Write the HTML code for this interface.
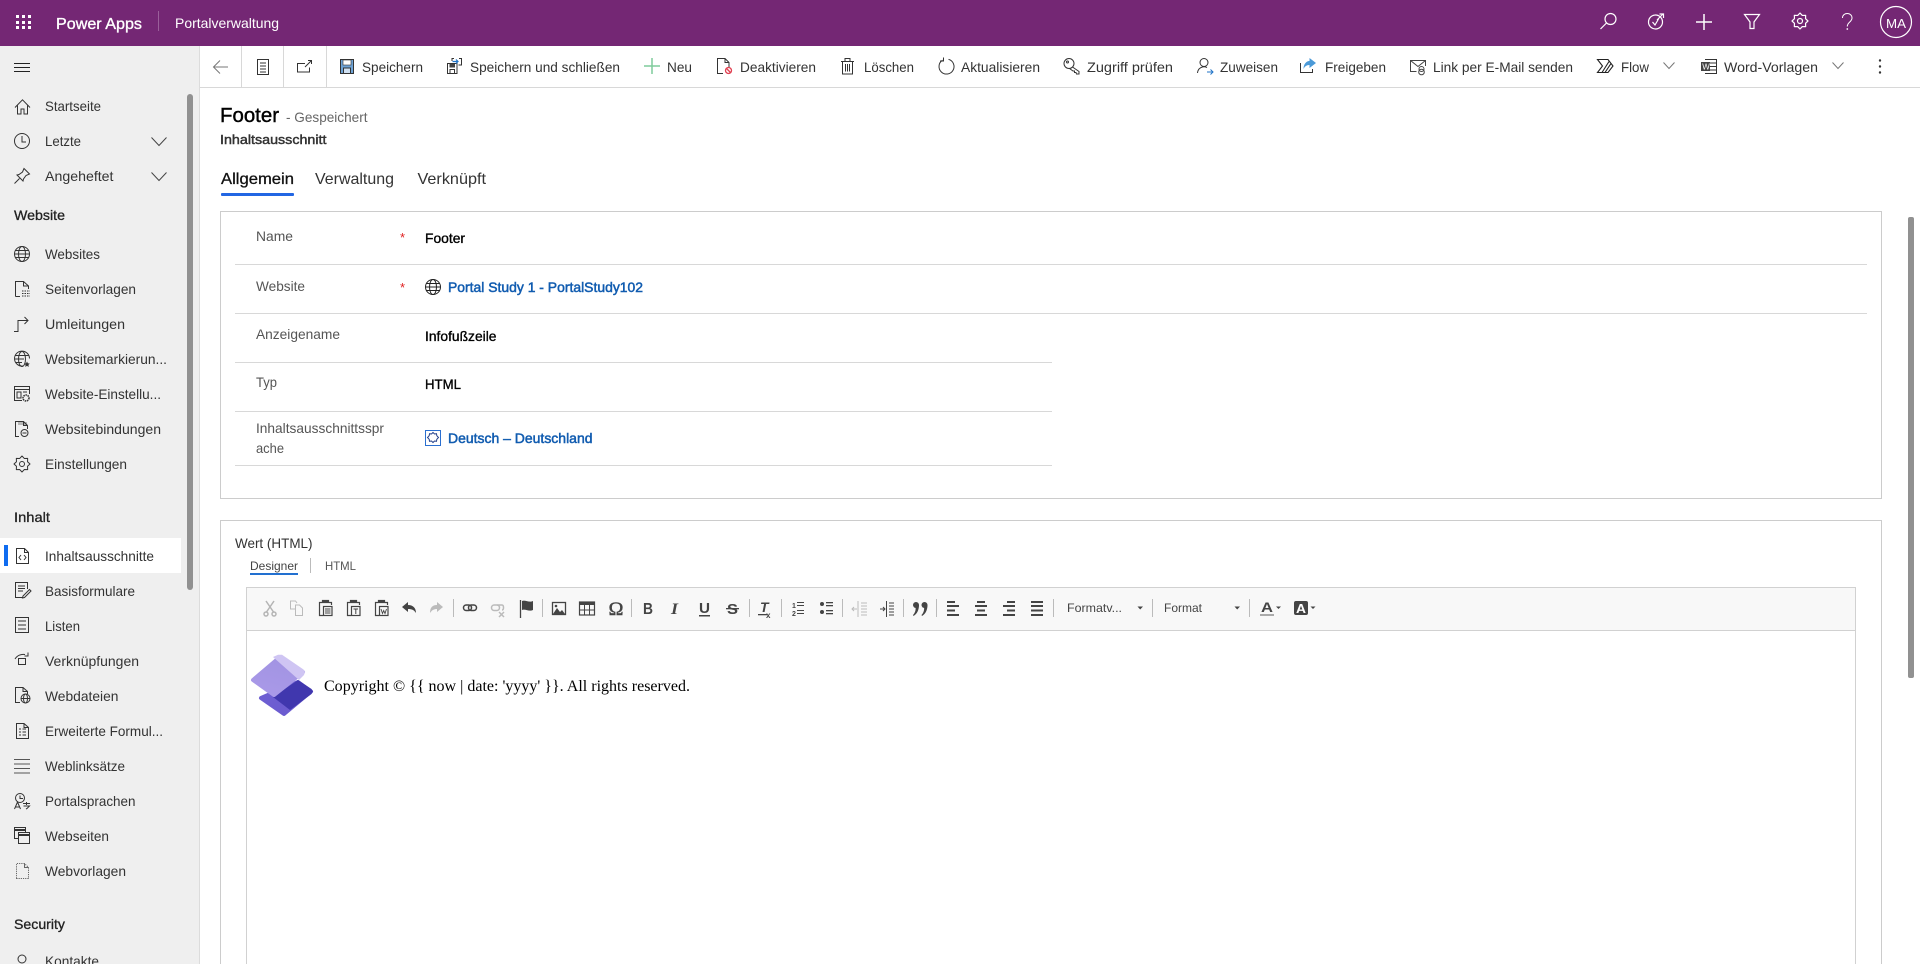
<!DOCTYPE html>
<html lang="de"><head><meta charset="utf-8"><title>Footer - Portalverwaltung</title>
<style>
html,body{margin:0;padding:0;width:1920px;height:964px;overflow:hidden;background:#fff}
svg{display:block;font-family:"Liberation Sans",sans-serif}
.i{fill:none;stroke:#333;stroke-width:1}
.w{fill:none;stroke:#fff;stroke-width:1.2}
.n{font-size:14px;fill:#333}
.h{font-size:14px;fill:#222;stroke:#222;stroke-width:.3}
.c{font-size:14px;fill:#333}
.l{font-size:14px;fill:#555}
.v{font-size:14px;fill:#000;stroke:#000;stroke-width:.35}
.a{font-size:14px;fill:#115cb0;stroke:#115cb0;stroke-width:.5}
.d{fill:#444}
.t{fill:none;stroke:#444;stroke-width:1.2}
.g{fill:none;stroke:#bbb;stroke-width:1.3}
.s{stroke:#bbb;stroke-width:1}
</style></head><body>
<svg width="1920" height="964" viewBox="0 0 1920 964" xmlns="http://www.w3.org/2000/svg" shape-rendering="geometricPrecision">
<defs>
<linearGradient id="lg1" x1="0.7" y1="0" x2="0.3" y2="1"><stop offset="0" stop-color="#a193e2"/><stop offset="1" stop-color="#a999e8"/></linearGradient>
<linearGradient id="lg2" x1="0" y1="0" x2="1" y2="1"><stop offset="0" stop-color="#6f60d3"/><stop offset="1" stop-color="#6a5acf"/></linearGradient>
</defs>
<rect width="1920" height="964" fill="#fff"/>

<!-- Header -->
<rect width="1920" height="46" fill="#742774"/>
<g fill="#fff">
<rect x="16" y="15" width="3" height="3"/><rect x="22" y="15" width="3" height="3"/><rect x="28" y="15" width="3" height="3"/>
<rect x="16" y="21" width="3" height="3"/><rect x="22" y="21" width="3" height="3"/><rect x="28" y="21" width="3" height="3"/>
<rect x="16" y="26" width="3" height="3"/><rect x="22" y="26" width="3" height="3"/><rect x="28" y="26" width="3" height="3"/>
</g>
<text x="56" y="29" font-size="16" fill="#fff" stroke="#fff" stroke-width=".35" textLength="86" lengthAdjust="spacingAndGlyphs">Power Apps</text>
<rect x="158" y="11" width="1" height="20" fill="#9a5f9a"/>
<text x="175" y="28" font-size="14" fill="#fff" textLength="104" lengthAdjust="spacingAndGlyphs">Portalverwaltung</text>
<g transform="translate(1600,13)" class="w"><circle cx="10.5" cy="6" r="5.5"/><path d="M6.5 10L.5 16"/></g>
<g transform="translate(1648,13)" class="w"><circle cx="7.5" cy="9" r="7"/><path d="M4.500 9l2.500 3 3.500-6M9 7l6-6M11.500 1H15.500V5"/></g>
<g transform="translate(1696,14)" class="w" style="stroke-width:1.500"><path d="M8 0V16M0 8H16"/></g>
<g transform="translate(1744,14)" class="w"><path d="M.5 .5H15.500L10 8V14.500H6V8Z"/></g>
<g transform="translate(1792,13)" class="w" stroke-linejoin="round"><path d="M16 8L13.540 10.300 13.660 13.660 10.300 13.540 8 16 5.700 13.540 2.340 13.660 2.460 10.300 0 8 2.460 5.700 2.340 2.340 5.700 2.460 8 0 10.300 2.460 13.660 2.340 13.540 5.700Z"/><circle cx="8" cy="8" r="2.500"/></g>
<path d="M1842.500 18c0-6 9.500-6 9.500 0 0 4-4.700 4-4.700 8.500" fill="none" stroke="#fff" stroke-width="1"/><circle cx="1847.300" cy="29" r=".9" fill="#fff"/>
<circle cx="1896" cy="22" r="15.500" fill="none" stroke="#fff" stroke-width="1.200"/>
<text x="1886" y="28" font-size="13" fill="#fff" textLength="20" lengthAdjust="spacingAndGlyphs">MA</text>

<!-- Sidebar -->
<rect x="0" y="46" width="200" height="918" fill="#efefef"/>
<rect x="199" y="46" width="1" height="918" fill="#dcdcdc"/>
<rect x="187" y="94" width="6" height="496" rx="3" fill="#919191"/>
<path d="M14 63.500H30M14 67.500H30M14 71.500H30" stroke="#222" stroke-width="1" fill="none"/>
<rect x="0" y="538" width="181" height="35" fill="#fff"/>
<rect x="4" y="545" width="4" height="21" fill="#0f6cf0"/>

<text x="45" y="111" class="n" textLength="56" lengthAdjust="spacingAndGlyphs">Startseite</text>
<text x="45" y="146" class="n" textLength="36" lengthAdjust="spacingAndGlyphs">Letzte</text>
<text x="45" y="181" class="n" textLength="68.500" lengthAdjust="spacingAndGlyphs">Angeheftet</text>
<text x="14" y="220" class="h" textLength="51" lengthAdjust="spacingAndGlyphs">Website</text>
<text x="45" y="259" class="n" textLength="55" lengthAdjust="spacingAndGlyphs">Websites</text>
<text x="45" y="294" class="n" textLength="91" lengthAdjust="spacingAndGlyphs">Seitenvorlagen</text>
<text x="45" y="329" class="n" textLength="80" lengthAdjust="spacingAndGlyphs">Umleitungen</text>
<text x="45" y="364" class="n" textLength="122" lengthAdjust="spacingAndGlyphs">Websitemarkierun...</text>
<text x="45" y="399" class="n" textLength="116" lengthAdjust="spacingAndGlyphs">Website-Einstellu...</text>
<text x="45" y="434" class="n" textLength="116" lengthAdjust="spacingAndGlyphs">Websitebindungen</text>
<text x="45" y="469" class="n" textLength="82" lengthAdjust="spacingAndGlyphs">Einstellungen</text>
<text x="14" y="522" class="h" textLength="36" lengthAdjust="spacingAndGlyphs">Inhalt</text>
<text x="45" y="561" class="n" textLength="109" lengthAdjust="spacingAndGlyphs">Inhaltsausschnitte</text>
<text x="45" y="596" class="n" textLength="90" lengthAdjust="spacingAndGlyphs">Basisformulare</text>
<text x="45" y="631" class="n" textLength="35" lengthAdjust="spacingAndGlyphs">Listen</text>
<text x="45" y="666" class="n" textLength="94" lengthAdjust="spacingAndGlyphs">Verknüpfungen</text>
<text x="45" y="701" class="n" textLength="73.500" lengthAdjust="spacingAndGlyphs">Webdateien</text>
<text x="45" y="736" class="n" textLength="118" lengthAdjust="spacingAndGlyphs">Erweiterte Formul...</text>
<text x="45" y="771" class="n" textLength="80" lengthAdjust="spacingAndGlyphs">Weblinksätze</text>
<text x="45" y="806" class="n" textLength="90.500" lengthAdjust="spacingAndGlyphs">Portalsprachen</text>
<text x="45" y="841" class="n" textLength="64" lengthAdjust="spacingAndGlyphs">Webseiten</text>
<text x="45" y="876" class="n" textLength="81" lengthAdjust="spacingAndGlyphs">Webvorlagen</text>
<text x="14" y="929" class="h" textLength="51" lengthAdjust="spacingAndGlyphs">Security</text>
<text x="45" y="966" class="n" textLength="54" lengthAdjust="spacingAndGlyphs">Kontakte</text>

<!-- Sidebar icons -->
<g transform="translate(15,99)" class="i"><path d="M0 8.500L7.500.8 15 8.500M2.500 6.500V15H6V10H9V15H12.500V6.500"/></g>
<g transform="translate(14,133)" class="i"><circle cx="8" cy="8" r="7.500"/><path d="M8 3V9H12"/></g>
<g transform="translate(14,168)" class="i"><path d="M10 .5L15.500 6 12 7.500 9.500 11 9 13 3 7 5 6.500 8.500 4ZM5.500 10.500L.5 15.500"/></g>
<path d="M151.500 137.500L159 145.500 166.500 137.500M151.500 172.500L159 180.500 166.500 172.500" fill="none" stroke="#444"/>
<g transform="translate(14,246)" class="i"><circle cx="8" cy="8" r="7.500"/><ellipse cx="8" cy="8" rx="3.500" ry="7.500"/><path d="M.5 8H15.500M1.500 4.500H14.500M1.500 11.500H14.500"/></g>
<g transform="translate(15,281)" class="i"><path d="M.5 15.500V.5H8.500L13.500 5V8M8.500 .5V5H13.500M.5 15.500H5"/><path d="M7 10H15M7 12.500H15M7 15H15" stroke-dasharray="1.500 1"/></g>
<g transform="translate(14,316)" class="i"><path d="M0 15.500H4V4.500H14M10.500 1L14 4.500 10.500 8"/></g>
<g transform="translate(14,351)" class="i"><path d="M9 15A7.500 7.500 0 1 1 15.500 7.500"/><ellipse cx="8" cy="8" rx="3.500" ry="7.500"/><path d="M.5 8H10M1.500 4.500H14.500M1.500 11.500H8"/><path d="M13 10.500l.9 1.800 1.900.3-1.400 1.300.4 2-1.800-1-1.800 1 .4-2-1.400-1.300 1.900-.3Z" fill="#333" stroke="none"/></g>
<g transform="translate(14,386)" class="i"><path d="M15.500 8V.5H.5V14.500H8M.5 3.500H15.500" /><rect x="3" y="6" width="4" height="6"/><circle cx="12" cy="12" r="3" stroke-dasharray="1.500 .7" stroke-width="1.500"/><path d="M9 6H13" /></g>
<g transform="translate(15,421)" class="i"><path d="M4 15.500H.5V.5H8.500L12.500 4.500V8M8.500 .5V4.500H12.500"/><rect x="3" y="1" width="9" height="3" fill="#333" opacity=".3" stroke="none"/><circle cx="9.500" cy="12" r="3.500"/><path d="M7.500 12H11.500"/></g>
<g transform="translate(14,456)" class="i" stroke-linejoin="round"><path d="M16 8L13.540 10.300 13.660 13.660 10.300 13.540 8 16 5.700 13.540 2.340 13.660 2.460 10.300 0 8 2.460 5.700 2.340 2.340 5.700 2.460 8 0 10.300 2.460 13.660 2.340 13.540 5.700Z"/><circle cx="8" cy="8" r="2.500"/></g>
<g transform="translate(16,548)" class="i"><path d="M.5 15.500V.5H8.500L12.500 4.500V15.500ZM8.500 .5V4.500H12.500M5 7L3 9.500 5 12M8 7L10 9.500 8 12"/></g>
<g transform="translate(15,582)" class="i"><path d="M8 15.500H.5V.5H12.500V7M3 4H10M3 6.500H10M3 9H8"/><path d="M14.500 7.500L16 9 9.500 15.500 7.500 16 8 14Z"/></g>
<g transform="translate(15,617)" class="i"><rect x=".5" y=".5" width="13" height="15"/><path d="M3 4H11M3 8H11M3 12H11"/></g>
<g transform="translate(14,652)" class="i"><path d="M1 7A9.500 9.500 0 0 1 11 2.500M14 .5V4H10.500"/><rect x="4.500" y="6.500" width="7" height="6"/></g>
<g transform="translate(15,687)" class="i"><path d="M5 15.500H.5V.5H8L12.500 4.500V7M8 .5V4.500H12.500"/><circle cx="10.500" cy="11.500" r="4.500"/><ellipse cx="10.500" cy="11.500" rx="2" ry="4.500"/><path d="M6 11.500H15"/></g>
<g transform="translate(16,723)" class="i"><path d="M.5 15.500V.5H8L12.500 4.500V15.500ZM8 .5V4.500H12.500M3 6H5M3 9H5M3 12H5M6.500 9H10M6.500 12H10M6.500 6H10"/></g>
<g transform="translate(14,758)" class="i" style="stroke:#555"><path d="M0 1.500H16M0 6H16M0 10.500H16M0 15H16"/></g>
<g transform="translate(14,793)" class="i"><circle cx="6" cy="5" r="4.500"/><path d="M6 2.500V5.500H9M.5 16L3.500 9 6.500 16M1.500 14H5.500M9 10.500H16M12.500 9V12M9.500 13H15.500L13 15.500 12 16"/></g>
<g transform="translate(14,827)" class="i"><rect x=".5" y=".5" width="11" height="11"/><rect x="4.500" y="5.500" width="11" height="11" fill="#efefef"/><path d="M.5 3H11.500M4.500 8H15.500" stroke-width="2"/></g>
<g transform="translate(16,863)" class="i" style="stroke:#666"><path d="M.5 15.500V.5H8.500L12.500 4.500V15.500Z" stroke-dasharray="1.200 1"/><path d="M8.500 .5V4.500H12.500"/></g>
<g transform="translate(14,954)" class="i"><circle cx="8" cy="5" r="4"/></g>

<!-- Command bar -->
<rect x="200" y="87" width="1720" height="1" fill="#d8d8d8"/>
<rect x="241" y="46" width="1" height="41" fill="#d8d8d8"/><rect x="283" y="46" width="1" height="41" fill="#d8d8d8"/><rect x="326" y="46" width="1" height="41" fill="#d8d8d8"/>
<path d="M228 67H214M220 60.500L213.500 67 220 73.500" fill="none" stroke="#777"/>
<g transform="translate(257,59)" class="i"><rect x=".5" y=".5" width="11" height="15"/><path d="M3 4H9M3 7H9M3 10H9M3 13H9"/></g>
<g transform="translate(297,60)" class="i"><path d="M8 3.500H.5V12H12.500V7.500M8 7L14.500 .5M11 .5H14.500V4"/></g>
<text x="362" y="72" class="c" textLength="61" lengthAdjust="spacingAndGlyphs">Speichern</text>
<g transform="translate(340,59)"><rect x=".5" y=".5" width="13" height="14" fill="#6ea3d6" stroke="#333"/><rect x="3" y="1" width="8" height="5" fill="#fff" stroke="#333" stroke-width=".6"/><rect x="3.500" y="9" width="7" height="5.500" fill="#cfe0f2" stroke="#333"/></g>
<text x="470" y="72" class="c" textLength="150" lengthAdjust="spacingAndGlyphs">Speichern und schließen</text>
<g transform="translate(447,58)"><path d="M.5 5.500H10V15.500H.5Z" fill="#fff" stroke="#333"/><rect x="2.500" y="6" width="5.500" height="3.500" fill="#444"/><rect x="3" y="11.500" width="4.500" height="4" fill="none" stroke="#333"/><path d="M5 3V.5H7M12 .5H14.500V7H11.500" fill="none" stroke="#333"/><path d="M5.500 3.500H11M9 1.500L11 3.500 9 5.500" fill="none" stroke="#1f73c7" stroke-width="1.200"/></g>
<text x="667" y="72" class="c" textLength="25" lengthAdjust="spacingAndGlyphs">Neu</text>
<path d="M652 58V74M644 66H660" stroke="#7fcb9c" stroke-width="1.500" fill="none"/>
<text x="740" y="72" class="c" textLength="76" lengthAdjust="spacingAndGlyphs">Deaktivieren</text>
<g transform="translate(717,58)" class="i"><path d="M6 15.500H.5V.5H8L12 4.500V9M8 .5V4.500H12"/><circle cx="11.500" cy="12.500" r="3" style="stroke:#e04050;stroke-width:1.300"/><path d="M9.500 10.500L13.500 14.500" style="stroke:#e04050;stroke-width:1.300"/></g>
<text x="864" y="72" class="c" textLength="50" lengthAdjust="spacingAndGlyphs">Löschen</text>
<g transform="translate(841,58)" class="i"><path d="M0 3.500H13M4 3.500V.5H9V3.500M1.500 3.500V16H11.500V3.500M4.500 6V13.500M6.500 6V13.500M8.500 6V13.500"/></g>
<text x="961" y="72" class="c" textLength="79" lengthAdjust="spacingAndGlyphs">Aktualisieren</text>
<g transform="translate(938,58)" class="i"><path d="M10.500 1.300A7.500 7.500 0 1 1 4.500 2.200M5.500 -.5V3H2"/></g>
<text x="1087" y="72" class="c" textLength="86" lengthAdjust="spacingAndGlyphs">Zugriff prüfen</text>
<g transform="translate(1063,58)" class="i"><circle cx="6" cy="5.500" r="5"/><path d="M9.500 9L16 13.500V16H13.500L13 14.500H11.500V13H10L6.500 10.500"/><circle cx="4.500" cy="4" r="1"/></g>
<text x="1220" y="72" class="c" textLength="58" lengthAdjust="spacingAndGlyphs">Zuweisen</text>
<g transform="translate(1197,58)" class="i"><circle cx="7" cy="4.500" r="4"/><path d="M.5 15A6.500 6.500 0 0 1 10 9.500"/><path d="M10 14H16M13.500 11.500L16 14 13.500 16.500" style="stroke:#1f73c7"/></g>
<text x="1325" y="72" class="c" textLength="61" lengthAdjust="spacingAndGlyphs">Freigeben</text>
<g transform="translate(1300,58)"><path d="M.5 5V14.500H12.500V11" fill="none" stroke="#333"/><path d="M9.500 0L16 5 9.500 10V7C6.500 7 4.500 8.500 3.500 11 3.500 6.500 6 3 9.500 3Z" fill="#4b9ad8"/></g>
<text x="1433" y="72" class="c" textLength="140" lengthAdjust="spacingAndGlyphs">Link per E-Mail senden</text>
<g transform="translate(1410,60)" class="i" style="stroke:#444"><path d="M6.500 11.500H.5V.5H15.500V6M.5 .5L8 6.500 15.500 .5"/><circle cx="11.500" cy="9" r="2.500"/><circle cx="11.500" cy="12" r="2.800"/></g>
<text x="1621" y="72" class="c" textLength="28" lengthAdjust="spacingAndGlyphs">Flow</text>
<g transform="translate(1597,59)" fill="none" stroke="#222" stroke-width="1.100"><path d="M.5 .5H11L16 7 11 13.500H.5L5.500 7Z"/><path d="M5 13.500L12 2.500M8 13.500L13.800 4.800"/></g>
<path d="M1663.500 62.500L1669 68.500 1674.500 62.500M1832.500 62.500L1838 68.500 1843.500 62.500" fill="none" stroke="#777"/>
<text x="1724" y="72" class="c" textLength="94" lengthAdjust="spacingAndGlyphs">Word-Vorlagen</text>
<g transform="translate(1701,59)"><path d="M4 .5H15.500V14.500H4M7 4H15.500M7 7.500H15.500M7 11H15.500" fill="none" stroke="#333"/><rect x="0" y="3" width="9" height="9" fill="#444"/><text x="1.300" y="10.500" font-size="8" fill="#fff">W</text></g>
<circle cx="1880" cy="60.500" r="1.200" fill="#333"/><circle cx="1880" cy="66.500" r="1.200" fill="#333"/><circle cx="1880" cy="72.500" r="1.200" fill="#333"/>

<!-- Title + tabs -->
<text x="220" y="122" font-size="20" fill="#000" stroke="#000" stroke-width=".4" textLength="59" lengthAdjust="spacingAndGlyphs">Footer</text>
<text x="286" y="122" font-size="14" fill="#666" textLength="81.500" lengthAdjust="spacingAndGlyphs">- Gespeichert</text>
<text x="220" y="144" font-size="13" fill="#333" stroke="#333" stroke-width=".45" textLength="106.500" lengthAdjust="spacingAndGlyphs">Inhaltsausschnitt</text>
<text x="221" y="184" font-size="16" fill="#111" stroke="#111" stroke-width=".3" textLength="73" lengthAdjust="spacingAndGlyphs">Allgemein</text>
<text x="315" y="184" font-size="16" fill="#333" textLength="79" lengthAdjust="spacingAndGlyphs">Verwaltung</text>
<text x="417.500" y="184" font-size="16" fill="#333" textLength="68.500" lengthAdjust="spacingAndGlyphs">Verknüpft</text>
<rect x="221" y="193" width="73" height="3" rx="1" fill="#2266e3"/>

<!-- Card 1 -->
<rect x="220.500" y="211.500" width="1661" height="287" fill="#fff" stroke="#cccccc"/>
<path d="M235 264.500H1867M235 313.500H1867M235 362.500H1052M235 411.500H1052M235 465.500H1052" stroke="#d8d8d8" fill="none"/>
<text x="256" y="241" class="l" textLength="37" lengthAdjust="spacingAndGlyphs">Name</text>
<text x="256" y="291" class="l" textLength="49" lengthAdjust="spacingAndGlyphs">Website</text>
<text x="256" y="339" class="l" textLength="84" lengthAdjust="spacingAndGlyphs">Anzeigename</text>
<text x="256" y="387" class="l" textLength="21" lengthAdjust="spacingAndGlyphs">Typ</text>
<text x="256" y="433" class="l" textLength="128" lengthAdjust="spacingAndGlyphs">Inhaltsausschnittsspr</text>
<text x="256" y="453" class="l" textLength="28" lengthAdjust="spacingAndGlyphs">ache</text>
<text x="400" y="242" font-size="13" fill="#e02020">*</text>
<text x="400" y="292" font-size="13" fill="#e02020">*</text>
<text x="425" y="243" class="v" textLength="40" lengthAdjust="spacingAndGlyphs">Footer</text>
<g transform="translate(425,279)" class="i" style="stroke:#222"><circle cx="8" cy="8" r="7.500"/><ellipse cx="8" cy="8" rx="3.500" ry="7.500"/><path d="M.5 8H15.500M1.500 4.500H14.500M1.500 11.500H14.500"/></g>
<text x="448" y="292" class="a" textLength="195" lengthAdjust="spacingAndGlyphs">Portal Study 1 - PortalStudy102</text>
<text x="425" y="341" class="v" textLength="71.500" lengthAdjust="spacingAndGlyphs">Infofußzeile</text>
<text x="425" y="389" class="v" textLength="36" lengthAdjust="spacingAndGlyphs">HTML</text>
<g transform="translate(425,430)"><rect x=".5" y=".5" width="15" height="15" fill="#fff" stroke="#2a6fd0"/><path d="M8 2.500l1.500 1.500 2-.3.300 2 1.700 1.800-1.700 1.800-.3 2-2-.3L8 12.500l-1.500-1.500-2 .3-.3-2L2.500 7.500l1.700-1.800.3-2 2 .3Z" fill="none" stroke="#24408a"/></g>
<text x="448" y="443" class="a" textLength="144.500" lengthAdjust="spacingAndGlyphs">Deutsch – Deutschland</text>

<!-- Card 2 -->
<path d="M220.500 964V520.500H1881.500V964" fill="#fff" stroke="#cccccc"/>
<text x="235" y="548" class="c" textLength="77.500" lengthAdjust="spacingAndGlyphs">Wert (HTML)</text>
<text x="250" y="570" font-size="12" fill="#444" textLength="48" lengthAdjust="spacingAndGlyphs">Designer</text>
<rect x="250" y="573" width="48" height="2" fill="#2270d0"/>
<rect x="310" y="558" width="1" height="15" fill="#bbb"/>
<text x="325" y="570" font-size="12" fill="#555" textLength="31" lengthAdjust="spacingAndGlyphs">HTML</text>

<!-- Editor -->
<path d="M246.500 964V587.500H1855.500V964" fill="#fff" stroke="#d1d1d1"/>
<rect x="247" y="588" width="1608" height="42" fill="#f8f8f8"/>
<rect x="247" y="630" width="1608" height="1" fill="#d1d1d1"/>
<g class="s">
<path d="M453.500 599V617M542.500 599V617M631.500 599V617M749.500 599V617M781.500 599V617M842.500 599V617M903.500 599V617M936.500 599V617M1053.500 599V617M1152.500 599V617M1249.500 599V617"/>
</g>
<!-- cut -->
<g class="g" style="stroke:#b5b5b5;stroke-width:1.500"><path d="M266 601L273.500 612M274 601L266.500 612"/><circle cx="266" cy="614" r="2"/><circle cx="274" cy="614" r="2"/></g>
<!-- copy -->
<g class="g" style="stroke-width:1"><path d="M295 609H290.500V601H295.500L297 603M295.500 605H299.500L302.500 608V615.500H295.500Z"/></g>
<!-- paste -->
<g class="t"><path d="M322 602.500H319.500V615.500H323M329 602.500H331.500V605"/><rect x="322.500" y="600.500" width="6" height="2" fill="#444"/><rect x="323.500" y="606.500" width="8.500" height="9"/><path d="M325 609H330.500M325 611H330.500M325 613H330.500" stroke-width="1"/></g>
<g class="t"><path d="M350 602.500H347.500V615.500H351M357 602.500H359.500V605"/><rect x="350.500" y="600.500" width="6" height="2" fill="#444"/><rect x="351.500" y="606.500" width="8.500" height="9"/><path d="M353.500 609H358M355.800 609V614" stroke-width="1"/></g>
<g class="t"><path d="M378 602.500H375.500V615.500H379M385 602.500H387.500V605"/><rect x="378.500" y="600.500" width="6" height="2" fill="#444"/><rect x="379.500" y="606.500" width="8.500" height="9"/><path d="M381 609L382.500 613.500 383.700 610.500 385 613.500 386.500 609" stroke-width=".9"/></g>
<!-- undo / redo -->
<path d="M402 607L408 602V605C413 605 416 608 416 613 414 610 412 609 408 609V612Z" fill="#444"/>
<path d="M443 607L437 602V605C432 605 430 608 430 613 432 610 434 609 437 609V612Z" fill="#bbb"/>
<!-- link -->
<g fill="none" stroke="#444" stroke-width="1.500"><rect x="463.500" y="605" width="8" height="5.500" rx="2.700"/><rect x="468.500" y="605" width="8" height="5.500" rx="2.700"/></g>
<g fill="none" stroke="#bbb" stroke-width="1.500"><rect x="491.500" y="605" width="8" height="5.500" rx="2.700"/><path d="M497 605H502C504 605 504 610 502 610"/><path d="M499 612L504 617M504 612L499 617"/></g>
<!-- flag -->
<path d="M520.500 600V618" stroke="#444" stroke-width="1.300"/><path d="M522 601C525 599.500 529 603 533 601V610C529 612 525 608.500 522 610Z" fill="#444"/>
<!-- image -->
<rect x="552.500" y="602.500" width="13" height="12" fill="none" stroke="#444" stroke-width="1.300"/><path d="M553 614L557 608 560 612 562 610 565 614Z" fill="#444"/><circle cx="556" cy="606" r="1.300" fill="#444"/>
<!-- table -->
<rect x="579.500" y="602" width="15" height="13" fill="none" stroke="#444" stroke-width="1.200"/><rect x="579.500" y="602" width="15" height="3" fill="#444"/><path d="M584.500 605V615M589.500 605V615M580 610H594" stroke="#444"/>
<!-- omega -->
<text x="608.500" y="615" font-size="19" fill="#444" stroke="#444" stroke-width=".4" font-family="Liberation Serif" textLength="15" lengthAdjust="spacingAndGlyphs">Ω</text>
<!-- B I U S -->
<text x="643" y="614" font-size="16" font-weight="bold" fill="#444" textLength="10" lengthAdjust="spacingAndGlyphs">B</text>
<text x="671" y="614" font-size="16" font-weight="bold" font-style="italic" fill="#444" font-family="Liberation Serif" textLength="7" lengthAdjust="spacingAndGlyphs">I</text>
<text x="699" y="613" font-size="15" font-weight="bold" fill="#444" textLength="11" lengthAdjust="spacingAndGlyphs">U</text><rect x="699" y="615" width="11" height="1.500" fill="#444"/>
<text x="727" y="614" font-size="15" font-weight="bold" fill="#444" textLength="11" lengthAdjust="spacingAndGlyphs">S</text><rect x="726" y="608" width="13" height="1.300" fill="#444"/>
<!-- clear -->
<text x="760" y="612" font-size="14" font-weight="bold" font-style="italic" fill="#444">T</text><rect x="758" y="614" width="9" height="1.300" fill="#444"/><text x="766" y="618" font-size="8" font-weight="bold" fill="#444">x</text>
<!-- lists -->
<g fill="#444"><text x="792" y="608" font-size="7" font-weight="bold">1</text><text x="792" y="616" font-size="7" font-weight="bold">2</text><rect x="797" y="602" width="7" height="1"/><rect x="797" y="605" width="7" height="1"/><rect x="797" y="610" width="7" height="1"/><rect x="797" y="613" width="7" height="1"/>
<circle cx="822" cy="604" r="2"/><circle cx="822" cy="612" r="2"/><rect x="826" y="602" width="7" height="1.300"/><rect x="826" y="605" width="7" height="1.300"/><rect x="826" y="610" width="7" height="1.300"/><rect x="826" y="613" width="7" height="1.300"/></g>
<g fill="none" stroke="#bbb"><path d="M858 601V617M861 603H867M861 606H867M861 609H867M861 612H867M861 615H867M852 609H857M854 607L852 609 854 611"/></g>
<g fill="none" stroke="#444"><path d="M886.500 601V617M889 603H894M889 606H894M889 609H894M889 612H894M889 615H894M880 609H885M883 607L885 609 883 611"/></g>
<!-- quote -->
<g fill="#444"><circle cx="916" cy="605" r="3"/><circle cx="924.500" cy="605" r="3"/><path d="M916.500 605H919C919 610 917 614 913.500 616L913 615C915 613 916 610 915.500 607ZM925 605H927.500C927.500 610 925.500 614 922 616L921.500 615C923.500 613 924.500 610 924 607Z"/></g>
<!-- aligns -->
<g fill="#444"><rect x="947" y="601" width="8" height="2"/><rect x="947" y="605" width="12" height="2"/><rect x="947" y="609.500" width="8" height="2"/><rect x="947" y="614" width="12" height="2"/>
<rect x="977" y="601" width="8" height="2"/><rect x="975" y="605" width="12" height="2"/><rect x="977" y="609.500" width="8" height="2"/><rect x="975" y="614" width="12" height="2"/>
<rect x="1007" y="601" width="8" height="2"/><rect x="1003" y="605" width="12" height="2"/><rect x="1007" y="609.500" width="8" height="2"/><rect x="1003" y="614" width="12" height="2"/>
<rect x="1031" y="601" width="12" height="2"/><rect x="1031" y="605" width="12" height="2"/><rect x="1031" y="609.500" width="12" height="2"/><rect x="1031" y="614" width="12" height="2"/></g>
<text x="1067" y="612" font-size="12" fill="#444" textLength="55" lengthAdjust="spacingAndGlyphs">Formatv...</text>
<path d="M1137.500 606.500H1143L1140.200 609.500Z" fill="#444"/>
<text x="1164" y="612" font-size="12" fill="#444" textLength="38" lengthAdjust="spacingAndGlyphs">Format</text>
<path d="M1234.500 606.500H1240L1237.200 609.500Z" fill="#444"/>
<text x="1261" y="612" font-size="14" font-weight="bold" fill="#444" textLength="12" lengthAdjust="spacingAndGlyphs">A</text><rect x="1260" y="614" width="14" height="2" fill="#aaa"/>
<path d="M1276 606.500H1281L1278.500 609Z" fill="#444"/>
<rect x="1294" y="601" width="14" height="14" rx="2" fill="#444"/><text x="1296" y="613" font-size="13" font-weight="bold" fill="#fff" textLength="10" lengthAdjust="spacingAndGlyphs">A</text>
<path d="M1310.500 606.500H1315.500L1313 609Z" fill="#444"/>

<!-- Logo -->
<g stroke-linejoin="round">
<path d="M298 682L311 691.500 284 714 261 698Z" fill="url(#lg2)" stroke="url(#lg2)" stroke-width="4"/>
<path d="M298 680L311.500 689 313 691.500 311.500 694 290 710 273 697Z" fill="#4037ae"/>
<path d="M280 657L303 672 274 695 253 680Z" fill="url(#lg1)" stroke="url(#lg1)" stroke-width="4"/>
<path d="M273 657L278 654.800 282 654.800 303.500 669.500 305 672 304 675 299 680Z" fill="#cfc5f3"/>
</g>
<text x="324" y="691" font-size="16" fill="#000" font-family="Liberation Serif,serif" textLength="366" lengthAdjust="spacingAndGlyphs">Copyright © {{ now | date: 'yyyy' }}. All rights reserved.</text>

<!-- Main scrollbar -->
<rect x="1908" y="217" width="6" height="461" rx="2" fill="#919191"/>
</svg>
</body></html>
